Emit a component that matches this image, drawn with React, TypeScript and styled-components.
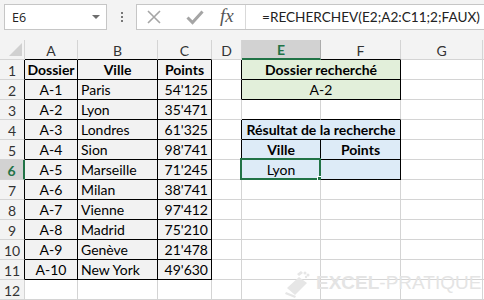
import React from 'react';
import styled, { createGlobalStyle } from 'styled-components';

const GRID = '#d4d4d4';
const GREEN = '#217346';
const CELL_FONT = "Lato, 'Open Sans', sans-serif";

const GlobalStyle = createGlobalStyle`
  html, body {
    margin: 0;
    padding: 0;
    background: #ffffff;
    overflow: hidden;
  }
`;

// column widths include the right grid line
const colWidths = [25, 53, 80, 54, 30, 79, 80, 82];

const tableA = ['Dossier', 'A-1', 'A-2', 'A-3', 'A-4', 'A-5', 'A-6', 'A-7', 'A-8', 'A-9', 'A-10'];
const tableB = ['Ville', 'Paris', 'Lyon', 'Londres', 'Sion', 'Marseille', 'Milan', 'Vienne', 'Madrid', 'Genève', 'New York'];
const tableC = ['Points', "54'125", "35'471", "61'325", "98'741", "71'245", "38'741", "97'412", "75'210", "21'478", "49'630"];

// cells with a thin black border around them
const inBox = (r: number, c: number) => {
  if (r >= 1 && r <= 11 && c >= 0 && c <= 2) return true;
  if ([1, 2, 4, 5, 6].includes(r) && (c === 4 || c === 5)) return true;
  return false;
};

type Align = 'left' | 'center' | 'right';

interface CellSpec {
  col: number;
  span?: number;
  text?: string;
  bold?: boolean;
  align?: Align;
  fill?: string;
  selected?: boolean;
}

const buildRow = (r: number): CellSpec[] => {
  const cells: CellSpec[] = [];
  const head = r === 1;
  if (r <= 11) {
    cells.push({ col: 0, text: tableA[r - 1], bold: head, align: 'center', fill: '#f2f2f2' });
    cells.push({ col: 1, text: tableB[r - 1], bold: head, align: head ? 'center' : 'left', fill: '#f2f2f2' });
    cells.push({ col: 2, text: tableC[r - 1], bold: head, align: head ? 'center' : 'right', fill: '#f2f2f2' });
  } else {
    cells.push({ col: 0 }, { col: 1 }, { col: 2 });
  }
  cells.push({ col: 3 });
  if (r === 1) cells.push({ col: 4, span: 2, text: 'Dossier recherché', bold: true, align: 'center', fill: '#e2efda' });
  else if (r === 2) cells.push({ col: 4, span: 2, text: 'A-2', align: 'center', fill: '#e2efda' });
  else if (r === 4) cells.push({ col: 4, span: 2, text: 'Résultat de la recherche', bold: true, align: 'center', fill: '#ddebf7' });
  else if (r === 5) {
    cells.push({ col: 4, text: 'Ville', bold: true, align: 'center', fill: '#ddebf7' });
    cells.push({ col: 5, text: 'Points', bold: true, align: 'center', fill: '#ddebf7' });
  } else if (r === 6) {
    cells.push({ col: 4, text: 'Lyon', align: 'center', fill: '#ddebf7', selected: true });
    cells.push({ col: 5, fill: '#ddebf7' });
  } else cells.push({ col: 4 }, { col: 5 });
  cells.push({ col: 6 }, { col: 7 });
  return cells;
};

const rows = Array.from({ length: 12 }, (_, i) => i + 1);
const letters = ['A', 'B', 'C', 'D', 'E', 'F', 'G', ''];

const App = () => {
  return (
    <Page>
      <GlobalStyle />
      <Toolbar>
        <NameBox>
          <span>E6</span>
          <DropArrow />
        </NameBox>
        <Dots>
          <i />
          <i />
          <i />
        </Dots>
        <FormulaBar>
          <IconGroup>
            <IconButton $w={40}>
              <svg width="16" height="16" viewBox="0 0 16 16">
                <path d="M2 2 L14 14 M14 2 L2 14" stroke="#a5a5a5" strokeWidth="1.6" fill="none" />
              </svg>
            </IconButton>
            <IconButton $w={34}>
              <svg width="18" height="16" viewBox="0 0 18 16">
                <path d="M1.5 8.5 L6.5 13.5 L16.5 2.5" stroke="#a5a5a5" strokeWidth="3" fill="none" />
              </svg>
            </IconButton>
            <Fx>fx</Fx>
          </IconGroup>
          <FormulaText>=RECHERCHEV(E2;A2:C11;2;FAUX)</FormulaText>
        </FormulaBar>
      </Toolbar>

      <Sheet>
        <Corner>
          <svg width="13" height="13" viewBox="0 0 13 13">
            <path d="M13 0 L13 13 L0 13 Z" fill="#d0d0d0" />
          </svg>
        </Corner>
        {letters.map((l, c) => (
          <ColHead key={l + c} $selected={l === 'E'} $blackBelow={inBox(1, c) && l !== 'E'}>
            {l}
          </ColHead>
        ))}

        {rows.map((r) => (
          <React.Fragment key={r}>
            <RowHead $selected={r === 6} $blackRight={inBox(r, 0)}>
              {r}
            </RowHead>
            {buildRow(r).map((cell) => {
              const last = cell.col + (cell.span || 1) - 1;
              return (
                <Cell
                  key={cell.col}
                  $span={cell.span || 1}
                  $fill={cell.fill}
                  $bold={cell.bold}
                  $align={cell.align || 'left'}
                  $rb={inBox(r, last) || inBox(r, last + 1)}
                  $bb={inBox(r, cell.col) || inBox(r + 1, cell.col)}
                >
                  {cell.text}
                  {cell.selected && (
                    <Selection>
                      <FillHandle />
                    </Selection>
                  )}
                </Cell>
              );
            })}
          </React.Fragment>
        ))}
        <Watermark>
          <svg width="30" height="30" viewBox="0 0 30 30">
            <g fill="#e6e6e6">
              <path d="M3 20 L15 9 L23 15 L11 27 Z" />
              <path d="M2 24 L12 28 L11 30 L1 26 Z" />
              <path d="M13 6 L17 3 L19 5 L15 8 Z" />
              <circle cx="21" cy="5" r="1.5" />
              <circle cx="24" cy="7" r="1.5" />
              <circle cx="22" cy="9" r="1.2" />
            </g>
          </svg>
          <WmText>
            <b>EXCEL</b>-PRATIQUE
          </WmText>
        </Watermark>
      </Sheet>
    </Page>
  );
};

const Page = styled.div`
  width: 484px;
  height: 300px;
  overflow: hidden;
  background: #ffffff;
`;

const Toolbar = styled.div`
  height: 40px;
  background: #f3f3f3;
  display: flex;
  align-items: flex-start;
  padding: 4px 0 0 4px;
  box-sizing: border-box;
`;

const NameBox = styled.div`
  width: 103px;
  height: 26px;
  box-sizing: border-box;
  background: #ffffff;
  border: 1px solid #c6c6c6;
  display: flex;
  align-items: center;
  justify-content: space-between;
  padding: 0 6px 0 7px;
  font-family: 'Open Sans', sans-serif;
  font-size: 12.5px;
  color: #222;
`;

const DropArrow = styled.span`
  width: 0;
  height: 0;
  border-left: 4px solid transparent;
  border-right: 4px solid transparent;
  border-top: 4px solid #6d6d6d;
`;

const Dots = styled.div`
  width: 29px;
  height: 26px;
  display: flex;
  flex-direction: column;
  align-items: center;
  justify-content: center;
  gap: 2px;

  i {
    width: 2px;
    height: 2px;
    background: #777;
  }
`;

const FormulaBar = styled.div`
  flex: 1;
  height: 26px;
  box-sizing: border-box;
  background: #ffffff;
  border: 1px solid #c6c6c6;
  border-right: none;
  display: flex;
  align-items: center;
`;

const IconGroup = styled.div`
  width: 109px;
  height: 100%;
  display: flex;
  align-items: center;
  border-right: 1px solid #d9d9d9;
  padding-left: 9px;
  box-sizing: border-box;
`;

const IconButton = styled.span<{ $w: number }>`
  width: ${(p) => p.$w}px;
  display: flex;
  align-items: center;
  justify-content: flex-start;
`;

const Fx = styled.span`
  font-family: 'Liberation Serif', serif;
  font-style: italic;
  font-size: 19px;
  color: #555555;
  margin-top: -2px;
`;

const FormulaText = styled.span`
  padding-left: 16px;
  font-family: ${CELL_FONT};
  font-size: 13.6px;
  color: #222;
  white-space: nowrap;
`;

const Sheet = styled.div`
  position: relative;
  display: grid;
  grid-template-columns: ${colWidths.map((w) => w + 'px').join(' ')} 1fr;
  grid-auto-rows: 20px;
  font-family: ${CELL_FONT};
  font-size: 14px;
  color: #000;
`;

const Corner = styled.div`
  background: #f3f3f3;
  border-right: 1px solid ${GRID};
  border-bottom: 1px solid ${GRID};
  display: flex;
  align-items: flex-end;
  justify-content: flex-end;
  padding: 0 2px 3px 0;
  box-sizing: border-box;
`;

const ColHead = styled.div<{ $selected?: boolean; $blackBelow?: boolean }>`
  box-sizing: border-box;
  background: ${(p) => (p.$selected ? '#d2d2d2' : '#f3f3f3')};
  border-right: 1px solid ${(p) => (p.$selected ? '#ababab' : GRID)};
  border-bottom: ${(p) => (p.$selected ? `2px solid ${GREEN}` : `1px solid ${p.$blackBelow ? '#000' : GRID}`)};
  display: flex;
  align-items: center;
  justify-content: center;
  color: ${(p) => (p.$selected ? GREEN : '#333')};
  font-weight: ${(p) => (p.$selected ? 'bold' : 'normal')};
  padding-top: 1px;
`;

const RowHead = styled.div<{ $selected?: boolean; $blackRight?: boolean }>`
  box-sizing: border-box;
  background: ${(p) => (p.$selected ? '#d2d2d2' : '#f3f3f3')};
  border-bottom: 1px solid ${GRID};
  border-right: ${(p) => (p.$selected ? `2px solid ${GREEN}` : `1px solid ${p.$blackRight ? '#000' : GRID}`)};
  display: flex;
  align-items: center;
  justify-content: center;
  color: ${(p) => (p.$selected ? GREEN : '#333')};
  font-weight: ${(p) => (p.$selected ? 'bold' : 'normal')};
  padding-top: 1px;
`;

const Cell = styled.div<{
  $span: number;
  $fill?: string;
  $bold?: boolean;
  $align: Align;
  $rb?: boolean;
  $bb?: boolean;
}>`
  position: relative;
  box-sizing: border-box;
  grid-column: span ${(p) => p.$span};
  background: ${(p) => p.$fill || '#ffffff'};
  border-right: 1px solid ${(p) => (p.$rb ? '#000' : GRID)};
  border-bottom: 1px solid ${(p) => (p.$bb ? '#000' : GRID)};
  font-weight: ${(p) => (p.$bold ? 'bold' : 'normal')};
  display: flex;
  align-items: flex-end;
  justify-content: ${(p) => (p.$align === 'left' ? 'flex-start' : p.$align === 'right' ? 'flex-end' : 'center')};
  padding: 0 3px 0 3px;
  line-height: 19px;
  white-space: nowrap;
`;

const Selection = styled.div`
  position: absolute;
  left: -2px;
  top: -2px;
  right: -1px;
  bottom: -1px;
  border: 2px solid ${GREEN};
  pointer-events: none;
`;

const FillHandle = styled.div`
  position: absolute;
  right: -4px;
  bottom: -4px;
  width: 5px;
  height: 5px;
  background: ${GREEN};
  border: 1px solid #ffffff;
  border-right: none;
  border-bottom: none;
`;

const Watermark = styled.div`
  position: absolute;
  left: 284px;
  top: 228px;
  display: flex;
  align-items: center;
  gap: 2px;
  white-space: nowrap;
  pointer-events: none;
`;

const WmText = styled.span`
  font-family: 'Liberation Sans', sans-serif;
  font-size: 19px;
  color: #e4e4e4;
  white-space: nowrap;

  b {
    font-weight: bold;
  }
`;

export default App;
